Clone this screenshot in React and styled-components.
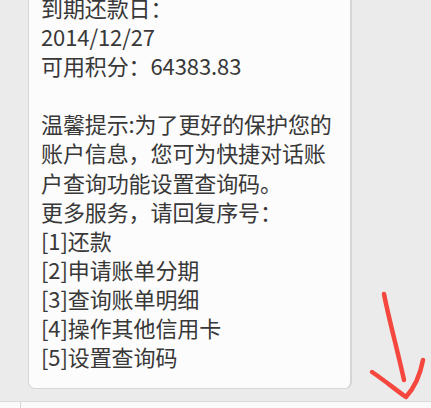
import React from "react";
import styled, { createGlobalStyle } from "styled-components";

const lines = [
  "到期还款日：",
  "2014/12/27",
  "可用积分：64383.83",
  "",
  "温馨提示:为了更好的保护您的",
  "账户信息，您可为快捷对话账",
  "户查询功能设置查询码。",
  "更多服务，请回复序号：",
  "[1]还款",
  "[2]申请账单分期",
  "[3]查询账单明细",
  "[4]操作其他信用卡",
  "[5]设置查询码",
];

const Global = createGlobalStyle`
  html, body {
    margin: 0;
    padding: 0;
    background: #ebebeb;
    overflow: hidden;
  }
`;

const Screen = styled.div`
  width: 431px;
  height: 408px;
  display: flex;
  flex-direction: column;
  position: relative;
  overflow: hidden;
  background: #ebebeb;
  font-family: "Noto Sans CJK SC", "Noto Sans", sans-serif;
`;

const Messages = styled.div`
  flex: 1;
  padding-left: 28px;
  overflow: hidden;
`;

const Bubble = styled.div`
  width: 297px;
  margin-top: -22px;
  padding: 14px 12px 17px 12px;
  background: #fcfcfc;
  border: 1px solid #d6d6d6;
  border-right-width: 2px;
  border-radius: 7px;
`;

const Line = styled.div`
  font-size: 22px;
  line-height: 29.1px;
  height: 29.1px;
  color: #383838;
  white-space: nowrap;
  letter-spacing: -0.1px;
`;

const InputBar = styled.div`
  height: 6px;
  background: #fafafa;
  border-top: 1px solid #dadada;
  display: flex;
`;

const Divider = styled.div`
  width: 20px;
  border-right: 1px solid #d4d4d4;
`;

const Arrow = styled.svg`
  position: absolute;
  left: 360px;
  top: 280px;
`;

export default function App() {
  return (
    <Screen>
      <Global />
      <Messages>
        <Bubble>
          {lines.map((t, i) => (
            <Line key={i}>{t}</Line>
          ))}
        </Bubble>
      </Messages>
      <InputBar>
        <Divider />
      </InputBar>
      <Arrow width="71" height="128" viewBox="0 0 71 128">
        <g
          fill="none"
          stroke="#f6473f"
          strokeWidth="4.5"
          strokeLinecap="round"
          strokeLinejoin="round"
        >
          <path d="M24 14 C29 40 38 72 44 100" />
          <path d="M12 92 C24 100 36 110 46 117 C54 108 60 96 63 80" />
        </g>
      </Arrow>
    </Screen>
  );
}
